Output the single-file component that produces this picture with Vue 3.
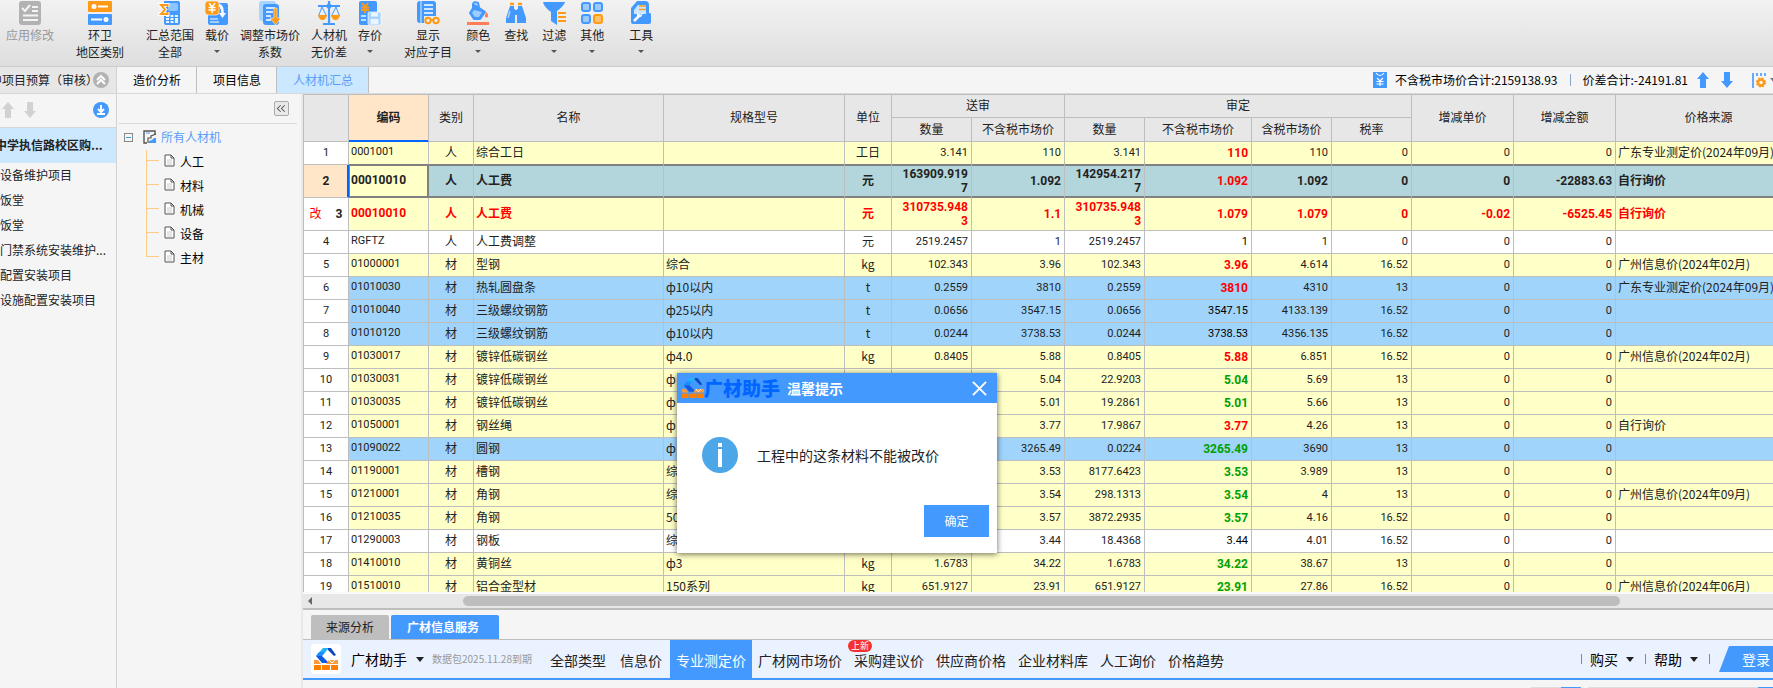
<script setup>
import { ref } from 'vue'

// 工具栏分组
const toolGroups = [
    [
        {
            lines: ['应用修改'], disabled: true,
            icon: '<rect x="1" width="22" height="24" rx="3" fill="#b2b2b2"/><path d="M4 7l3 3 5-6M14 6h6M14 10h6M5 14.500h15M5 19h15" fill="none" stroke="#f4f4f4" stroke-width="2"/>'
        }
    ],
    [
        {
            lines: ['环卫', '地区类别'],
            icon: '<rect width="24" height="11" rx="1" fill="#ff9a16"/><rect y="13" width="24" height="11" rx="1" fill="#4499ff"/><circle cx="6" cy="5.500" r="2.500" fill="#fff"/><path d="M10 5.500h10M3 18.500h11" stroke="#fff" stroke-width="2"/><circle cx="18" cy="18.500" r="2.500" fill="#fff"/>'
        }
    ],
    [
        {
            lines: ['汇总范围', '全部'],
            icon: '<path d="M6 0h14q2 0 2 2v20q0 2-2 2H8q-2 0-2-2z" fill="#4499ff"/><rect x="10" y="2" width="10" height="8" rx="2" fill="#8cc5ff"/><path d="M8 14h3v2H8zM12.500 14h3v2h-3zM17 14h3v2h-3zM8 17h3v2H8zM12.500 17h3v2h-3zM17 17h3v5h-3zM8 20h3v2H8zM12.500 20h3v2h-3z" fill="#e8f4ff"/><path d="M9.500 6V4H3l4 4.500L3 13h6.500v-2" fill="none" stroke="#fff" stroke-width="4"/><path d="M9.500 6V4H3l4 4.500L3 13h6.500v-2" fill="none" stroke="#ff9a16" stroke-width="2"/>'
        },
        {
            lines: ['载价'], arrow: true,
            icon: '<rect x="3" y="2" width="20" height="22" rx="2" fill="#4499ff"/><path d="M5 18h8M5 21h9" stroke="#bfe0ff" stroke-width="1.500"/><rect x="0" y="0" width="14" height="14" rx="3" fill="#ff9a16" stroke="#fff" stroke-width=".6"/><path d="M4 2l3 4 3-4M3.500 6.500h7M3.500 9h7M7 6v6" stroke="#fff" stroke-width="1.500" fill="none"/><path d="M14 4q4 1 3.500 9M14 12l3.500 5 3.500-5z" fill="#fff"/><path d="M14 4q4 1 3.500 9" stroke="#fff" stroke-width="2.500" fill="none"/>'
        },
        {
            lines: ['调整市场价', '系数'],
            icon: '<rect x="1" width="17" height="20" rx="3" fill="#a7d3ff"/><rect x="5" y="3" width="16" height="21" rx="3" fill="#4499ff"/><path d="M8 7h9M8 11h7M8 15h5M8 19h5" stroke="#fff" stroke-width="1.500"/><path d="M16 7h3v10h4l-5.500 7L12 17h4z" fill="#ff9a16" stroke="#fff" stroke-width=".5"/>'
        },
        {
            lines: ['人材机', '无价差'],
            icon: '<path d="M12 0v22M1 5h22M6 23h12" stroke="#4499ff" stroke-width="2.200"/><circle cx="12" cy="5" r="2.500" fill="#4499ff"/><path d="M5 6L1.500 15h8zM19 6l-4.500 9h8z" fill="none" stroke="#4499ff"/><path d="M1 14h9q-1 5-4.500 5T1 14zM14 14h9q-1 5-4.500 5T14 14z" fill="#ff9a16"/>'
        },
        {
            lines: ['存价'], arrow: true,
            icon: '<rect x="1" width="18" height="24" rx="2" fill="#4499ff"/><path d="M4 2l3 4 3-4M3 6.500h8M3 9h8M7 6v6" stroke="#ff9a16" stroke-width="1.800" fill="none"/><path d="M3 15h5M3 19h5" stroke="#bfe0ff" stroke-width="2"/><rect x="10" y="11" width="13" height="13" rx="1.500" fill="#a7d3ff" stroke="#fff" stroke-width=".7"/><path d="M13 11.500h7v4h-7zM12.500 18h8v5h-8z" fill="#e9f5ff"/>'
        }
    ],
    [
        {
            lines: ['显示', '对应子目'],
            icon: '<rect x="1" width="19" height="22" rx="3" fill="#4499ff"/><path d="M5 0v22" stroke="#a7d3ff" stroke-width="1.500"/><path d="M8 4h9M8 8h9M8 12h9M8 16h3" stroke="#fff" stroke-width="1.700"/><path d="M8 15h15v9H8z" fill="#ececec"/><circle cx="12" cy="19.500" r="2.700" fill="none" stroke="#ff9a16" stroke-width="2"/><circle cx="20" cy="19.500" r="2.700" fill="none" stroke="#ff9a16" stroke-width="2"/><path d="M14 19h4" stroke="#ff9a16" stroke-width="2"/>'
        },
        {
            lines: ['颜色'], arrow: true,
            icon: '<path d="M9 4l10 7-5 7H8l-4-6z" fill="#4499ff" stroke="#4499ff" stroke-width="2" stroke-linejoin="round"/><path d="M8 9l8 2-3 5H9l-3-4z" fill="#9dceff"/><path d="M7 8V3q1-3 5-1l1 4" fill="none" stroke="#4499ff" stroke-width="2"/><path d="M20.500 11q3.500 5 0 5.500-3.500-.5 0-5.500z" fill="#ff7d59"/><path d="M1 22.500h22" stroke="#ff7d59" stroke-width="3"/>'
        },
        {
            lines: ['查找'],
            icon: '<path d="M6 5h4v3h1v14H2v-5zM14 5h4l4 12v5h-9V8h1z" fill="#4499ff"/><path d="M10 9h4v5h-4z" fill="#4499ff"/><path d="M6 3h4M14 3h4" stroke="#ff9a16" stroke-width="2.500"/><path d="M6 10l-2 7" stroke="#a7d3ff" stroke-width="1.500"/>'
        },
        {
            lines: ['过滤'], arrow: true,
            icon: '<path d="M1 1h22q-1 4-8 9v14l-6-4V11Q2 6 1 1z" fill="#4499ff"/><path d="M16 12h8M16 16h8M16 20h8" stroke="#ff9a16" stroke-width="2"/>'
        },
        {
            lines: ['其他'], arrow: true,
            icon: '<g fill="#9bc9fa" stroke="#4499ff" stroke-width="2"><rect x="2" y="2" width="8" height="8" rx="2"/><rect x="14" y="2" width="8" height="8" rx="2"/><rect x="2" y="14" width="8" height="8" rx="2"/><rect x="14" y="14" width="8" height="8" rx="2" fill="#ffc36b" stroke="#ff9a16"/></g>'
        }
    ],
    [
        {
            lines: ['工具'], arrow: true,
            icon: '<path d="M8 0h8q4 0 4 4v8h1q1 0 1 2v7q0 2-2 2H4q-2 0-2-2V7z" fill="#4499ff"/><path d="M5 9l4-5h8v9H5z" fill="#cde6ff"/><path d="M10 5h7M10 8.500h7" stroke="#ff9a16" stroke-width="1.700"/><path d="M5 20l6-6" stroke="#fff" stroke-width="2.500"/><path d="M8 12v4h4l2-4-3 2z" fill="#fff"/>'
        }
    ]
]

const projects = ['设备维护项目', '饭堂', '饭堂', '门禁系统安装维护...', '配置安装项目', '设施配置安装项目']
const pageTabs = ['造价分析', '项目信息', '人材机汇总']
const treeNodes = ['人工', '材料', '机械', '设备', '主材']
const activePage = ref('人材机汇总')
const activeService = ref('专业测定价')
const dialogVisible = ref(true)

const colNames = ['no', 'code', 'type', 'name', 'spec', 'unit', 'qty', 'price', 'qty', 'price2', 'tax', 'rate', 'diff', 'amount', 'source']

// bg: 行底色  tone: 审定价颜色
const rows = [
    { no: 1, bg: 'yellow', tone: 'up', code: '0001001', type: '人', name: '综合工日', spec: '', unit: '工日', nums: ['3.141', '110', '3.141', '110', '110', '0', '0', '0'], source: '广东专业测定价(2024年09月)' },
    { no: 2, bg: 'selected', tone: 'up', code: '00010010', type: '人', name: '人工费', spec: '', unit: '元', nums: ['163909.9197', '1.092', '142954.2177', '1.092', '1.092', '0', '0', '-22883.63'], source: '自行询价' },
    { no: 3, bg: 'yellow changed', tone: 'up', mark: '改', code: '00010010', type: '人', name: '人工费', spec: '', unit: '元', nums: ['310735.9483', '1.1', '310735.9483', '1.079', '1.079', '0', '-0.02', '-6525.45'], source: '自行询价' },
    { no: 4, bg: '', tone: 'flat', code: 'RGFTZ', type: '人', name: '人工费调整', spec: '', unit: '元', nums: ['2519.2457', '1', '2519.2457', '1', '1', '0', '0', '0'], source: '' },
    { no: 5, bg: 'yellow', tone: 'up', code: '01000001', type: '材', name: '型钢', spec: '综合', unit: 'kg', nums: ['102.343', '3.96', '102.343', '3.96', '4.614', '16.52', '0', '0'], source: '广州信息价(2024年02月)' },
    { no: 6, bg: 'blue', tone: 'up', code: '01010030', type: '材', name: '热轧圆盘条', spec: 'ф10以内', unit: 't', nums: ['0.2559', '3810', '0.2559', '3810', '4310', '13', '0', '0'], source: '广东专业测定价(2024年09月)' },
    { no: 7, bg: 'blue', tone: 'flat', code: '01010040', type: '材', name: '三级螺纹钢筋', spec: 'ф25以内', unit: 't', nums: ['0.0656', '3547.15', '0.0656', '3547.15', '4133.139', '16.52', '0', '0'], source: '' },
    { no: 8, bg: 'blue', tone: 'flat', code: '01010120', type: '材', name: '三级螺纹钢筋', spec: 'ф10以内', unit: 't', nums: ['0.0244', '3738.53', '0.0244', '3738.53', '4356.135', '16.52', '0', '0'], source: '' },
    { no: 9, bg: 'yellow', tone: 'up', code: '01030017', type: '材', name: '镀锌低碳钢丝', spec: 'ф4.0', unit: 'kg', nums: ['0.8405', '5.88', '0.8405', '5.88', '6.851', '16.52', '0', '0'], source: '广州信息价(2024年02月)' },
    { no: 10, bg: 'yellow', tone: 'down', code: '01030031', type: '材', name: '镀锌低碳钢丝', spec: 'ф', unit: 'kg', nums: ['22.9203', '5.04', '22.9203', '5.04', '5.69', '13', '0', '0'], source: '' },
    { no: 11, bg: 'yellow', tone: 'down', code: '01030035', type: '材', name: '镀锌低碳钢丝', spec: 'ф', unit: 'kg', nums: ['19.2861', '5.01', '19.2861', '5.01', '5.66', '13', '0', '0'], source: '' },
    { no: 12, bg: 'yellow', tone: 'up', code: '01050001', type: '材', name: '钢丝绳', spec: 'ф', unit: 'kg', nums: ['17.9867', '3.77', '17.9867', '3.77', '4.26', '13', '0', '0'], source: '自行询价' },
    { no: 13, bg: 'blue', tone: 'down', code: '01090022', type: '材', name: '圆钢', spec: 'ф', unit: 't', nums: ['0.0224', '3265.49', '0.0224', '3265.49', '3690', '13', '0', '0'], source: '' },
    { no: 14, bg: 'yellow', tone: 'down', code: '01190001', type: '材', name: '槽钢', spec: '综合', unit: 'kg', nums: ['8177.6423', '3.53', '8177.6423', '3.53', '3.989', '13', '0', '0'], source: '' },
    { no: 15, bg: 'yellow', tone: 'down', code: '01210001', type: '材', name: '角钢', spec: '综合', unit: 'kg', nums: ['298.1313', '3.54', '298.1313', '3.54', '4', '13', '0', '0'], source: '广州信息价(2024年09月)' },
    { no: 16, bg: 'yellow', tone: 'down', code: '01210035', type: '材', name: '角钢', spec: '50', unit: 'kg', nums: ['3872.2935', '3.57', '3872.2935', '3.57', '4.16', '16.52', '0', '0'], source: '' },
    { no: 17, bg: '', tone: 'flat', code: '01290003', type: '材', name: '钢板', spec: '综合', unit: 'kg', nums: ['18.4368', '3.44', '18.4368', '3.44', '4.01', '16.52', '0', '0'], source: '' },
    { no: 18, bg: 'yellow', tone: 'down', code: '01410010', type: '材', name: '黄铜丝', spec: 'ф3', unit: 'kg', nums: ['1.6783', '34.22', '1.6783', '34.22', '38.67', '13', '0', '0'], source: '' },
    { no: 19, bg: 'yellow', tone: 'down', code: '01510010', type: '材', name: '铝合金型材', spec: '150系列', unit: 'kg', nums: ['651.9127', '23.91', '651.9127', '23.91', '27.86', '16.52', '0', '0'], source: '广州信息价(2024年06月)' }
]

const services = [
    { name: '全部类型', wide: true },
    { name: '信息价', wide: true },
    { name: '专业测定价' },
    { name: '广材网市场价' },
    { name: '采购建议价', badge: '上新' },
    { name: '供应商价格' },
    { name: '企业材料库' },
    { name: '人工询价' },
    { name: '价格趋势' }
]

const logo = '<path d="M9 1h6L8 9H2z" fill="#1fb4f5"/><path d="M2 9l3-4h6L8 9z" fill="#1e8cff"/><path d="M2 9h6l7 7H8z" fill="#0f5be0"/><path d="M14 1h3l5 7-2 1-6-6z" fill="#0d47c0"/><path d="M0 13h4l3 4H0zM15 13h9v4H12z" fill="#ff9a3c"/><path d="M0 18h7v5H0zM8 18h8v5H8zM17 18h7v5h-7z" fill="#ff8000"/><path d="M15 13l3 3 3-3" fill="none" stroke="#fff"/>'
</script>

<template>
    <div class="app">
        <!-- 顶部工具栏 -->
        <header class="ribbon">
            <div v-for="(group, g) in toolGroups" :key="g" class="ribbon-group" :class="'group-' + g">
                <button v-for="tool in group" :key="tool.lines[0]" type="button" class="tool" :disabled="tool.disabled">
                    <svg class="tool-icon" viewBox="0 0 24 24" v-html="tool.icon"></svg>
                    <span v-for="line in tool.lines" :key="line" class="tool-text">{{ line }}</span>
                    <span v-if="tool.arrow" class="caret small"></span>
                </button>
            </div>
        </header>

        <div class="body">
            <!-- 项目列表 -->
            <aside class="projects">
                <div class="projects-title">
                    <span class="title-text">中项目预算（审核）</span>
                    <button type="button" class="round gray" aria-label="收起">
                        <svg viewBox="0 0 16 16"><path d="M4 8l4-4 4 4M4 12l4-4 4 4" /></svg>
                    </button>
                </div>
                <div class="projects-tools">
                    <button type="button" class="move" aria-label="上移">
                        <svg viewBox="0 0 12 16"><path d="M6 0l6 7H9v9H3V7H0z" /></svg>
                    </button>
                    <button type="button" class="move" aria-label="下移">
                        <svg viewBox="0 0 12 16"><path d="M6 16l6-7H9V0H3v9H0z" /></svg>
                    </button>
                    <button type="button" class="round" aria-label="展开">
                        <svg viewBox="0 0 16 16"><path d="M8 3v6M5 7l3 3 3-3M4 12h8" /></svg>
                    </button>
                </div>
                <div class="project current">中学执信路校区购...</div>
                <div v-for="(p, i) in projects" :key="i" class="project">{{ p }}</div>
            </aside>

            <main class="main">
                <nav class="page-tabs">
                    <button v-for="tab in pageTabs" :key="tab" type="button" class="page-tab"
                        :class="{ active: tab === activePage }" @click="activePage = tab">{{ tab }}</button>
                    <div class="summary">
                        <svg class="sum-icon" viewBox="0 0 14 16">
                            <path fill="#4499ff" d="M0 0h14v16H0z" />
                            <path d="M3 1q4 5 8 0M4 6l3 3 3-3M3.500 9.500h7M3.500 12h7M7 9v5" fill="none" stroke="#fff" stroke-width="1.200" />
                        </svg>
                        <span>不含税市场价合计:2159138.93</span>
                        <i class="split"></i>
                        <span>价差合计:-24191.81</span>
                        <button type="button" class="jump" aria-label="上一条">
                            <svg viewBox="0 0 12 16"><path d="M6 0l6 7H9v9H3V7H0z" /></svg>
                        </button>
                        <button type="button" class="jump" aria-label="下一条">
                            <svg viewBox="0 0 12 16"><path d="M6 16l6-7H9V0H3v9H0z" /></svg>
                        </button>
                        <button type="button" class="columns" aria-label="列设置">
                            <svg viewBox="0 0 14 15">
                                <path d="M1 0v15M5 0v3M9 0v3M13 0v3" stroke="#4499ff" stroke-width="1.600" />
                                <circle cx="9" cy="9.500" r="3" fill="none" stroke="#ff9a16" stroke-width="2.400" />
                                <circle cx="9" cy="9.500" r="4.300" fill="none" stroke="#ff9a16" stroke-width="1.400" stroke-dasharray="2 1.400" />
                            </svg>
                        </button>
                        <span class="caret cut"></span>
                    </div>
                </nav>

                <div class="content">
                    <!-- 材料分类树 -->
                    <section class="tree">
                        <div class="tree-head">
                            <button type="button" class="fold" aria-label="折叠">
                                <svg viewBox="0 0 16 16"><path d="M7 4L3 8l4 4M12 4L8 8l4 4" /></svg>
                            </button>
                        </div>
                        <div class="tree-root">
                            <span class="expander"></span>
                            <svg class="root-icon" viewBox="0 0 14 14">
                                <path d="M12 5V1H1v12h3" fill="none" stroke="#555" stroke-width="1.400" />
                                <path d="M5 13V8h3V6l5-2" fill="none" stroke="#555" stroke-width="1.200" />
                                <path d="M6 13v-2l3-1 2-2h2v5z" fill="#4499ff" />
                                <path d="M3 3h4" stroke="#4499ff" />
                            </svg>
                            <a href="#">所有人材机</a>
                        </div>
                        <ul class="tree-list">
                            <li v-for="node in treeNodes" :key="node">
                                <svg class="file" viewBox="0 0 11 13">
                                    <path d="M1 1h6l3 3v8H1z" fill="#fff" stroke="#555" />
                                    <path d="M7 1v3h3" fill="none" stroke="#555" />
                                    <path d="M3 6h5M3 8h5M3 10h5" stroke="#ccc" />
                                </svg>
                                <a href="#">{{ node }}</a>
                            </li>
                        </ul>
                    </section>

                    <section class="work">
                        <div class="grid-wrap">
                            <table class="grid">
                                <colgroup>
                                    <col v-for="(c, i) in colNames" :key="i" :class="'w-' + c">
                                </colgroup>
                                <thead>
                                    <tr>
                                        <th rowspan="2"></th>
                                        <th rowspan="2" class="sorted">编码</th>
                                        <th rowspan="2">类别</th>
                                        <th rowspan="2">名称</th>
                                        <th rowspan="2">规格型号</th>
                                        <th rowspan="2">单位</th>
                                        <th colspan="2">送审</th>
                                        <th colspan="4">审定</th>
                                        <th rowspan="2">增减单价</th>
                                        <th rowspan="2">增减金额</th>
                                        <th rowspan="2">价格来源</th>
                                    </tr>
                                    <tr class="sub">
                                        <th>数量</th>
                                        <th>不含税市场价</th>
                                        <th>数量</th>
                                        <th>不含税市场价</th>
                                        <th>含税市场价</th>
                                        <th>税率</th>
                                    </tr>
                                </thead>
                                <tbody>
                                    <tr v-for="row in rows" :key="row.no" :class="row.bg">
                                        <td class="no"><span v-if="row.mark" class="mark">{{ row.mark }}</span>{{ row.no }}</td>
                                        <td class="code">{{ row.code }}</td>
                                        <td class="mid">{{ row.type }}</td>
                                        <td>{{ row.name }}</td>
                                        <td>{{ row.spec }}</td>
                                        <td class="mid">{{ row.unit }}</td>
                                        <td v-for="(n, i) in row.nums" :key="i" class="num" :class="i === 3 && row.tone">{{ n }}</td>
                                        <td>{{ row.source }}</td>
                                    </tr>
                                </tbody>
                            </table>
                        </div>
                        <div class="scrollbar">
                            <span class="scroll-left"></span>
                            <span class="thumb"></span>
                        </div>

                        <!-- 底部信息服务 -->
                        <div class="info-tabs">
                            <button type="button" class="info-tab">来源分析</button>
                            <button type="button" class="info-tab active">广材信息服务</button>
                        </div>
                        <div class="service">
                            <span class="logo-box"><svg viewBox="0 0 24 24" v-html="logo"></svg></span>
                            <button type="button" class="brand">广材助手<span class="caret"></span></button>
                            <span class="expire">数据包2025.11.28到期</span>
                            <nav class="service-nav">
                                <button v-for="s in services" :key="s.name" type="button" class="service-item"
                                    :class="{ active: s.name === activeService, wide: s.wide }" @click="activeService = s.name">
                                    {{ s.name }}<span v-if="s.badge" class="badge">{{ s.badge }}</span>
                                </button>
                            </nav>
                            <div class="account">
                                <button type="button" class="drop">购买<span class="caret"></span></button>
                                <button type="button" class="drop">帮助<span class="caret"></span></button>
                                <i class="bar"></i>
                                <button type="button" class="login">登录</button>
                            </div>
                        </div>
                        <div class="strip">
                            <span class="strip-a"></span>
                            <span class="strip-b"></span>
                        </div>
                    </section>
                </div>
            </main>
        </div>

        <!-- 提示弹窗 -->
        <div v-if="dialogVisible" class="dialog" role="dialog" aria-labelledby="dialog-title">
            <div class="dialog-head">
                <svg class="dialog-logo" viewBox="0 0 24 24" v-html="logo"></svg>
                <span class="wordmark">广材助手</span>
                <span id="dialog-title" class="dialog-title">温馨提示</span>
                <button type="button" class="close" aria-label="关闭" @click="dialogVisible = false">
                    <svg viewBox="0 0 16 16"><path d="M1 1l14 14M15 1L1 15" /></svg>
                </button>
            </div>
            <div class="dialog-body">
                <svg class="info" viewBox="0 0 36 36">
                    <circle cx="18" cy="18" r="18" fill="#4ca6e8" />
                    <path d="M16 6h4v4h-4zM16 12h4v18h-4z" fill="#fff" />
                </svg>
                <p>工程中的这条材料不能被改价</p>
            </div>
            <div class="dialog-foot">
                <button type="button" class="ok" @click="dialogVisible = false">确定</button>
            </div>
        </div>
    </div>
</template>

<style>
body {
    margin: 0;
    overflow: hidden;
}
</style>

<style scoped>
.app {
    position: relative;
    display: flex;
    flex-direction: column;
    height: 100vh;
    overflow: hidden;
    background: #f5f5f5;
    color: #222;
    font: 12px/16px "Noto Sans CJK SC", sans-serif;
}

.app * {
    box-sizing: border-box;
}

button {
    margin: 0;
    padding: 0;
    border: 0;
    background: none;
    color: inherit;
    font: inherit;
    white-space: nowrap;
}

svg {
    display: block;
}

a {
    color: inherit;
    text-decoration: none;
}

.caret {
    display: inline-block;
    border: 4px solid transparent;
    border-top: 5px solid #222;
    border-bottom: 0;
}

.caret.small {
    margin-top: 7px;
    border-width: 3px;
    border-top-color: #555;
    border-bottom: 0;
}

/* 工具栏 */
.ribbon {
    display: flex;
    flex: none;
    gap: 22px;
    height: 67px;
    padding: 1px 6px 0;
    border-bottom: 1px solid #ccc;
    background: linear-gradient(#f2f2f2, #dedede);
}

.ribbon-group {
    display: flex;
    gap: 11px;
}

.group-3 {
    gap: 14px;
}

.group-4 {
    padding-left: 3px;
}

.tool {
    display: flex;
    flex-direction: column;
    align-items: center;
}

.tool-icon {
    width: 24px;
    height: 24px;
    margin-bottom: 1px;
}

.tool-text {
    line-height: 17px;
}

.tool:disabled {
    color: #999;
}

.body {
    display: flex;
    flex: 1;
    min-height: 0;
}

/* 左侧项目 */
.projects {
    flex: none;
    width: 117px;
    border-right: 1px solid #d2d2d2;
}

.projects-title {
    display: flex;
    align-items: center;
    height: 27px;
    border-bottom: 1px solid #d6d6d6;
    background: #e7e7e7;
}

.title-text {
    width: 93px;
    overflow: hidden;
    text-indent: -10px;
    white-space: nowrap;
}

.round {
    width: 16px;
    height: 16px;
    border-radius: 50%;
    background: #4499ff;
}

.round path {
    fill: none;
    stroke: #fff;
    stroke-width: 2;
}

.round.gray {
    background: #b2b2b2;
}

.projects-tools {
    display: flex;
    align-items: center;
    gap: 10px;
    height: 34px;
    padding: 0 7px 2px 2px;
    border-bottom: 1px solid #d6d6d6;
}

.move,
.jump {
    width: 12px;
    height: 16px;
}

.move path {
    fill: #d2d2d2;
}

.projects-tools .round {
    margin-left: auto;
}

.project {
    height: 25px;
    line-height: 23px;
    overflow: hidden;
    white-space: nowrap;
}

.project.current {
    height: 35px;
    background: #cce8ff;
    font-weight: bold;
    line-height: 33px;
    text-indent: -5px;
}

.main {
    display: flex;
    flex: 1;
    flex-direction: column;
    min-width: 0;
}

/* 页签 */
.page-tabs {
    display: flex;
    flex: none;
    height: 27px;
    border-bottom: 1px solid #d9d9d9;
    overflow: hidden;
}

.page-tab {
    padding: 0 15px 0 16px;
    border-right: 1px solid #bebebe;
    color: #000;
}

.page-tab.active {
    background: #cce8ff;
    color: #5a9cf8;
}

.summary {
    display: flex;
    align-items: center;
    margin-left: auto;
    color: #000;
    white-space: nowrap;
}

.sum-icon {
    width: 14px;
    height: 16px;
    margin-right: 8px;
}

.split {
    width: 1px;
    height: 12px;
    margin: 0 12px;
    background: #87a3c8;
}

.jump {
    margin-left: 9px;
}

.jump + .jump {
    margin-left: 12px;
}

.jump path {
    fill: #4499ff;
}

.columns {
    width: 14px;
    height: 15px;
    margin-left: 19px;
}

.caret.cut {
    margin: 0 -5px 0 4px;
    border-top-color: #777;
}

.content {
    display: flex;
    flex: 1;
    min-height: 0;
}

/* 分类树 */
.tree {
    flex: none;
    width: 186px;
    padding: 0 4px 0 2px;
    border-right: 2px solid #e9e9e9;
}

.tree-head {
    display: flex;
    align-items: center;
    justify-content: flex-end;
    height: 30px;
    padding-right: 8px;
    border-bottom: 1px solid #d9d9d9;
}

.fold {
    width: 15px;
    height: 15px;
    border: 1px solid #aaa;
    border-radius: 2px;
    background: #e9e9e9;
}

.fold path {
    fill: none;
    stroke: #555;
    stroke-width: 1.3;
}

.tree-root {
    display: flex;
    align-items: center;
    height: 26px;
    padding-left: 5px;
    color: #5a9cf8;
}

.expander {
    width: 9px;
    height: 9px;
    margin-right: 10px;
    border: 1px solid #888;
    background: linear-gradient(#2aa7dd, #2aa7dd) center / 5px 1px no-repeat;
}

.root-icon {
    width: 14px;
    height: 14px;
    margin-right: 4px;
}

.tree-list {
    margin: 0;
    padding: 0 0 0 27px;
    list-style: none;
    color: #000;
}

.tree-list li {
    display: flex;
    align-items: center;
    gap: 5px;
    height: 24px;
    background:
        linear-gradient(#fc8, #fc8) 0 10px / 13px 1px no-repeat,
        linear-gradient(#fc8, #fc8) 0 0 / 1px 100% no-repeat;
}

.tree-list li:last-child {
    background:
        linear-gradient(#fc8, #fc8) 0 10px / 13px 1px no-repeat,
        linear-gradient(#fc8, #fc8) 0 0 / 1px 10px no-repeat;
}

.file {
    width: 11px;
    height: 13px;
    margin: 0 0 4px 18px;
}

.work {
    display: flex;
    flex: 1;
    flex-direction: column;
    min-width: 0;
}

/* 材料表 */
.grid-wrap {
    flex: 1;
    min-height: 0;
    overflow: hidden;
    border-top: 1px solid #bebebe;
    border-left: 1px solid #bebebe;
    background: #fff;
}

.grid {
    width: 100%;
    min-width: 1498px;
    table-layout: fixed;
    border-collapse: separate;
    border-spacing: 0;
}

.w-no,
.w-type {
    width: 45px;
}

.w-code,
.w-qty,
.w-tax,
.w-rate {
    width: 80px;
}

.w-name {
    width: 190px;
}

.w-spec {
    width: 181px;
}

.w-unit {
    width: 47px;
}

.w-price {
    width: 93px;
}

.w-price2 {
    width: 107px;
}

.w-diff,
.w-amount {
    width: 102px;
}

th,
td {
    height: 23px;
    padding: 0 2px 2px;
    border-right: 1px solid #bebebe;
    border-bottom: 1px solid #bebebe;
    text-align: left;
    line-height: 14px;
    overflow: hidden;
    white-space: nowrap;
}

th {
    background: #e7e7e7;
    font-weight: normal;
    text-align: center;
}

.sub th {
    height: 24px;
}

th.sorted {
    border-bottom-color: #0066ff;
    background: #ffe6c8;
    box-shadow: inset 0 -1px #0066ff;
    font-weight: bold;
}

.mid {
    text-align: center;
}

.num,
.no,
.code {
    font-family: Roboto, "Noto Sans CJK SC", sans-serif;
    font-size: 11px;
}

.no {
    padding-bottom: 0;
    text-align: center;
}

.num {
    padding: 0 3px 1px 5px;
    text-align: right;
    white-space: normal;
    word-break: break-all;
}

.yellow td {
    background: #ffffc8;
}

.blue td {
    background: #a0d4fb;
}

tr td.no {
    background: #fff;
}

.flat {
    color: #000;
}

.up {
    color: #f00;
    font-weight: bold;
    font-size: 12px;
}

.down {
    color: #00a000;
    font-weight: bold;
    font-size: 12px;
}

.selected td,
.changed td {
    height: 33px;
    font-weight: bold;
    font-size: 12px;
}

.changed td {
    color: #f00;
}

.changed td.no {
    color: #222;
}

.mark {
    margin-right: 14px;
    color: #f00;
    font-weight: normal;
}

tr:has(+ .selected) td:not(.no) {
    border-bottom-color: #808080;
}

.selected td:not(.no) {
    border-bottom-color: #808080;
    background: #b3d6dc;
    box-shadow: inset 0 1px #808080, inset 0 -1px #808080;
}

.selected td.code {
    border-right-color: #808080;
    background: #ffffc8;
    box-shadow: inset 0 0 0 1px #808080;
}

.selected td.no {
    border-right-color: #0066ff;
    background: #ffe6c8;
    box-shadow: inset -1px 0 #0066ff;
}

.scrollbar {
    display: flex;
    align-items: center;
    flex: none;
    height: 18px;
    padding-left: 5px;
    border-top: 2px solid #fafafa;
    border-bottom: 2px solid #bebebe;
    background: #e7e7e7;
}

.scroll-left {
    border: 4px solid transparent;
    border-right: 4px solid #666;
    border-left: 0;
}

.thumb {
    width: 79%;
    height: 10px;
    margin-left: 151px;
    border-radius: 5px;
    background: #bebebe;
}

/* 底部 */
.info-tabs {
    display: flex;
    flex: none;
    gap: 2px;
    padding: 5px 0 0 8px;
    border-bottom: 1px solid #bebebe;
}

.info-tab {
    height: 24px;
    padding: 0 15px;
    border-radius: 2px 2px 0 0;
    background: #bebebe;
}

.info-tab.active {
    padding: 0 20px 0 16px;
    background: #4499ff;
    color: #fff;
    font-weight: bold;
}

.service {
    display: flex;
    align-items: center;
    flex: none;
    height: 40px;
    padding-left: 8px;
    border-bottom: 2px solid #4499ff;
    background: #eaf1ff;
    font-size: 14px;
    white-space: nowrap;
}

.logo-box {
    width: 30px;
    height: 30px;
    padding: 3px;
    border-radius: 4px;
    background: #fff;
}

.brand {
    display: flex;
    align-items: center;
    gap: 9px;
    margin-left: 10px;
    color: #000;
}

.expire {
    margin-left: 8px;
    color: #999;
    font-size: 10px;
}

.service-nav {
    display: flex;
    align-self: stretch;
    margin-left: 12px;
}

.service-item {
    position: relative;
    padding: 1px 6px 0;
}

.service-item.wide {
    margin-right: 2px;
}

.service-item.active {
    background: #4499ff;
    color: #fff;
}

.badge {
    position: absolute;
    top: 0;
    left: 0;
    padding: 0 3px;
    border-radius: 6px;
    background: #f53030;
    color: #fff;
    font-size: 9px;
    line-height: 12px;
}

.account {
    display: flex;
    align-items: center;
    margin-left: auto;
}

.drop {
    display: flex;
    align-items: center;
    gap: 8px;
    margin-right: 11px;
    color: #000;
}

.drop::before,
.bar {
    width: 1px;
    height: 10px;
    background: #888;
    content: "";
}

.login {
    height: 26px;
    margin-left: 9px;
    padding: 0 3px 0 23px;
    background: #4499ff;
    clip-path: polygon(10px 0, 100% 0, 100% 100%, 0 100%);
    color: #fff;
}

.strip {
    display: flex;
    align-items: flex-end;
    justify-content: flex-end;
    flex: none;
    gap: 7px;
    height: 8px;
}

.strip-a,
.strip-b {
    width: 50px;
    height: 1px;
    border-right: 20px solid #4499ff;
    background: #ddd;
}

.strip-b {
    width: 185px;
    border-right-width: 15px;
}

/* 弹窗 */
.dialog {
    position: absolute;
    top: 373px;
    left: 677px;
    width: 320px;
    background: #fff;
    box-shadow: 0 1px 6px rgba(0, 0, 0, 0.6);
}

.dialog-head {
    display: flex;
    align-items: center;
    height: 30px;
    padding: 0 10px 0 5px;
    background: #4499ff;
    color: #fff;
}

.dialog-logo {
    width: 22px;
    height: 22px;
}

.wordmark {
    color: #0066ff;
    font-size: 19px;
    font-weight: 900;
}

.dialog-title {
    margin-left: 7px;
    font-size: 14px;
    font-weight: bold;
}

.close {
    width: 15px;
    height: 15px;
    margin-left: auto;
}

.close path {
    stroke: #fff;
    stroke-width: 2;
}

.dialog-body {
    display: flex;
    align-items: center;
    gap: 19px;
    height: 102px;
    padding: 2px 0 0 25px;
}

.info {
    width: 36px;
    height: 36px;
}

.dialog-body p {
    margin: 0;
    font-size: 14px;
}

.dialog-foot {
    display: flex;
    justify-content: flex-end;
    padding: 0 8px 16px;
}

.ok {
    width: 65px;
    height: 32px;
    background: #4499ff;
    color: #fff;
}
</style>
